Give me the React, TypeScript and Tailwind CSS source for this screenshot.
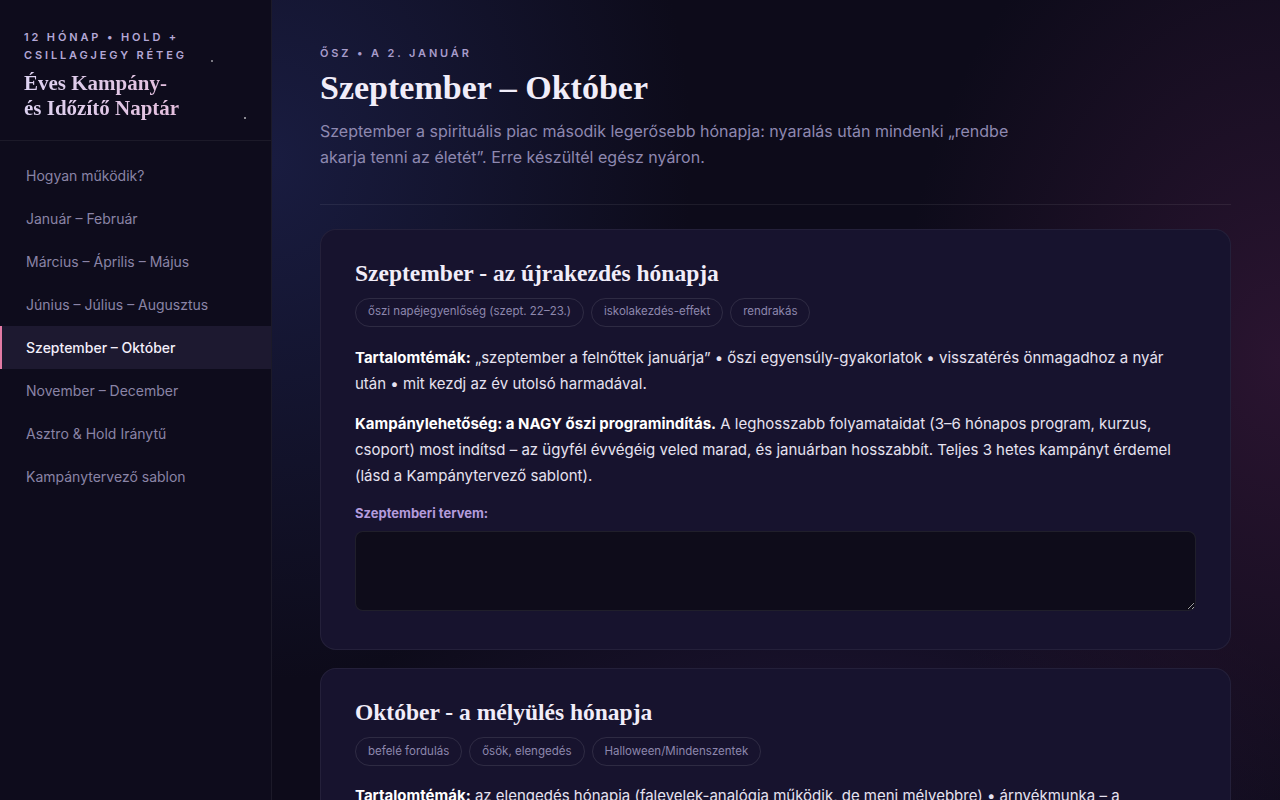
import { useState } from 'react'

const NAV = [
  'Hogyan működik?',
  'Január – Február',
  'Március – Április – Május',
  'Június – Július – Augusztus',
  'Szeptember – Október',
  'November – December',
  'Asztro & Hold Iránytű',
  'Kampánytervező sablon',
]

const SERIF = 'font-["Liberation_Serif",serif]'

function Tag({ children }: { children: string }) {
  return (
    <span className="flex h-[29px] items-center rounded-full border border-white/10 px-3 text-[11.5px] text-[#8d87ad]">
      {children}
    </span>
  )
}

export default function App() {
  const [plan, setPlan] = useState('')
  const active = 'Szeptember – Október'

  return (
    <div className='flex h-[800px] overflow-hidden bg-[#0d0b1a] font-["Inter",sans-serif] text-[#e6e2f0]'>
      <aside className="relative flex w-[272px] shrink-0 flex-col border-r border-white/[0.06] bg-[#0e0c1c]">
        <div className="border-b border-white/[0.06] px-6 pt-[28px] pb-[19px]">
          <p className="text-[11px] font-semibold leading-[18px] tracking-[0.26em] text-[#b4a8d6]">
            12 HÓNAP • HOLD + CSILLAGJEGY RÉTEG
          </p>
          <h2
            className={`${SERIF} mt-[7px] bg-gradient-to-r from-[#ddd3f2] to-[#e6b5d4] bg-clip-text text-[21px] leading-[25px] font-bold text-transparent`}
          >
            Éves Kampány-
            <br />
            és Időzítő Naptár
          </h2>
        </div>
        <span className="absolute top-[60px] left-[211px] h-[2px] w-[2px] rounded-full bg-white/60" />
        <span className="absolute top-[117px] left-[244px] h-[2px] w-[2px] rounded-full bg-white/70" />
        <nav className="flex flex-col pt-[13px]">
          {NAV.map((item) => {
            const on = item === active
            return (
              <a
                key={item}
                href="#"
                className={
                  on
                    ? 'h-[43px] border-l-2 border-[#e27aa4] bg-[#1d1930] pl-6 text-sm leading-[43px] font-medium text-[#f2eefa]'
                    : 'h-[43px] border-l-2 border-transparent pl-6 text-sm leading-[43px] text-[#8a84a6]'
                }
              >
                {item}
              </a>
            )
          })}
        </nav>
      </aside>

      <main className="flex-1 overflow-hidden bg-[radial-gradient(ellipse_420px_520px_at_0%_20%,#191c40_0%,transparent_100%),radial-gradient(ellipse_380px_520px_at_100%_45%,#2a1430_0%,transparent_100%),radial-gradient(ellipse_500px_300px_at_55%_100%,#1f1535_0%,transparent_100%)] px-12 pt-[45px]">
        <div className="max-w-[911px]">
          <p className="text-[11px] font-semibold tracking-[0.26em] text-[#a89ccb]">ŐSZ • A 2. JANUÁR</p>
          <h1 className={`${SERIF} mt-[5px] text-[34px] leading-[42px] font-bold text-[#f1edf9]`}>
            Szeptember – Október
          </h1>
          <p className="mt-[9px] max-w-[700px] text-base leading-[26px] text-[#8e88b0]">
            Szeptember a spirituális piac második legerősebb hónapja: nyaralás után mindenki „rendbe akarja tenni az
            életét”. Erre készültél egész nyáron.
          </p>
          <div className="mt-[34px] h-px bg-white/[0.07]" />

          <section className="mt-[24px] rounded-2xl border border-white/[0.06] bg-[#17132e] px-[34px] pt-[28px] pb-[38px]">
            <h3 className={`${SERIF} text-[23.5px] leading-[30px] font-bold text-[#f1edf9]`}>
              Szeptember - az újrakezdés hónapja
            </h3>
            <div className="mt-[10px] flex gap-[7px]">
              <Tag>őszi napéjegyenlőség (szept. 22–23.)</Tag>
              <Tag>iskolakezdés-effekt</Tag>
              <Tag>rendrakás</Tag>
            </div>
            <p className="mt-[18px] text-[15px] leading-[26px]">
              <b className="font-bold text-white">Tartalomtémák:</b> „szeptember a felnőttek januárja” • őszi
              egyensúly-gyakorlatok • visszatérés önmagadhoz a nyár után • mit kezdj az év utolsó harmadával.
            </p>
            <p className="mt-[14px] text-[15px] leading-[26px]">
              <b className="font-bold text-white">Kampánylehetőség: a NAGY őszi programindítás.</b> A leghosszabb
              folyamataidat (3–6 hónapos program, kurzus, csoport) most indítsd – az ügyfél évvégéig veled marad, és
              januárban hosszabbít. Teljes 3 hetes kampányt érdemel (lásd a Kampánytervező sablont).
            </p>
            <label className="mt-[15px] block text-[13px] font-bold text-[#b39bdc]">Szeptemberi tervem:</label>
            <textarea
              value={plan}
              onChange={(e) => setPlan(e.target.value)}
              className="mt-[8px] block h-[80px] w-full rounded-lg border border-white/[0.08] bg-[#0e0c1a] p-3 text-sm text-[#e6e2f0] outline-none"
            />
          </section>

          <section className="mt-[18px] rounded-2xl border border-white/[0.06] bg-[#17132e] px-[34px] pt-[28px] pb-[38px]">
            <h3 className={`${SERIF} text-[23.5px] leading-[30px] font-bold text-[#f1edf9]`}>
              Október - a mélyülés hónapja
            </h3>
            <div className="mt-[10px] flex gap-[7px]">
              <Tag>befelé fordulás</Tag>
              <Tag>ősök, elengedés</Tag>
              <Tag>Halloween/Mindenszentek</Tag>
            </div>
            <p className="mt-[17px] text-[15px] leading-[26px]">
              <b className="font-bold text-white">Tartalomtémák:</b> az elengedés hónapja (falevelek-analógia működik,
              de menj mélyebbre) • árnyékmunka – a sötétebbik évszak a belső munka ideje • őseink és a családi minták.
            </p>
          </section>
        </div>
      </main>
    </div>
  )
}
